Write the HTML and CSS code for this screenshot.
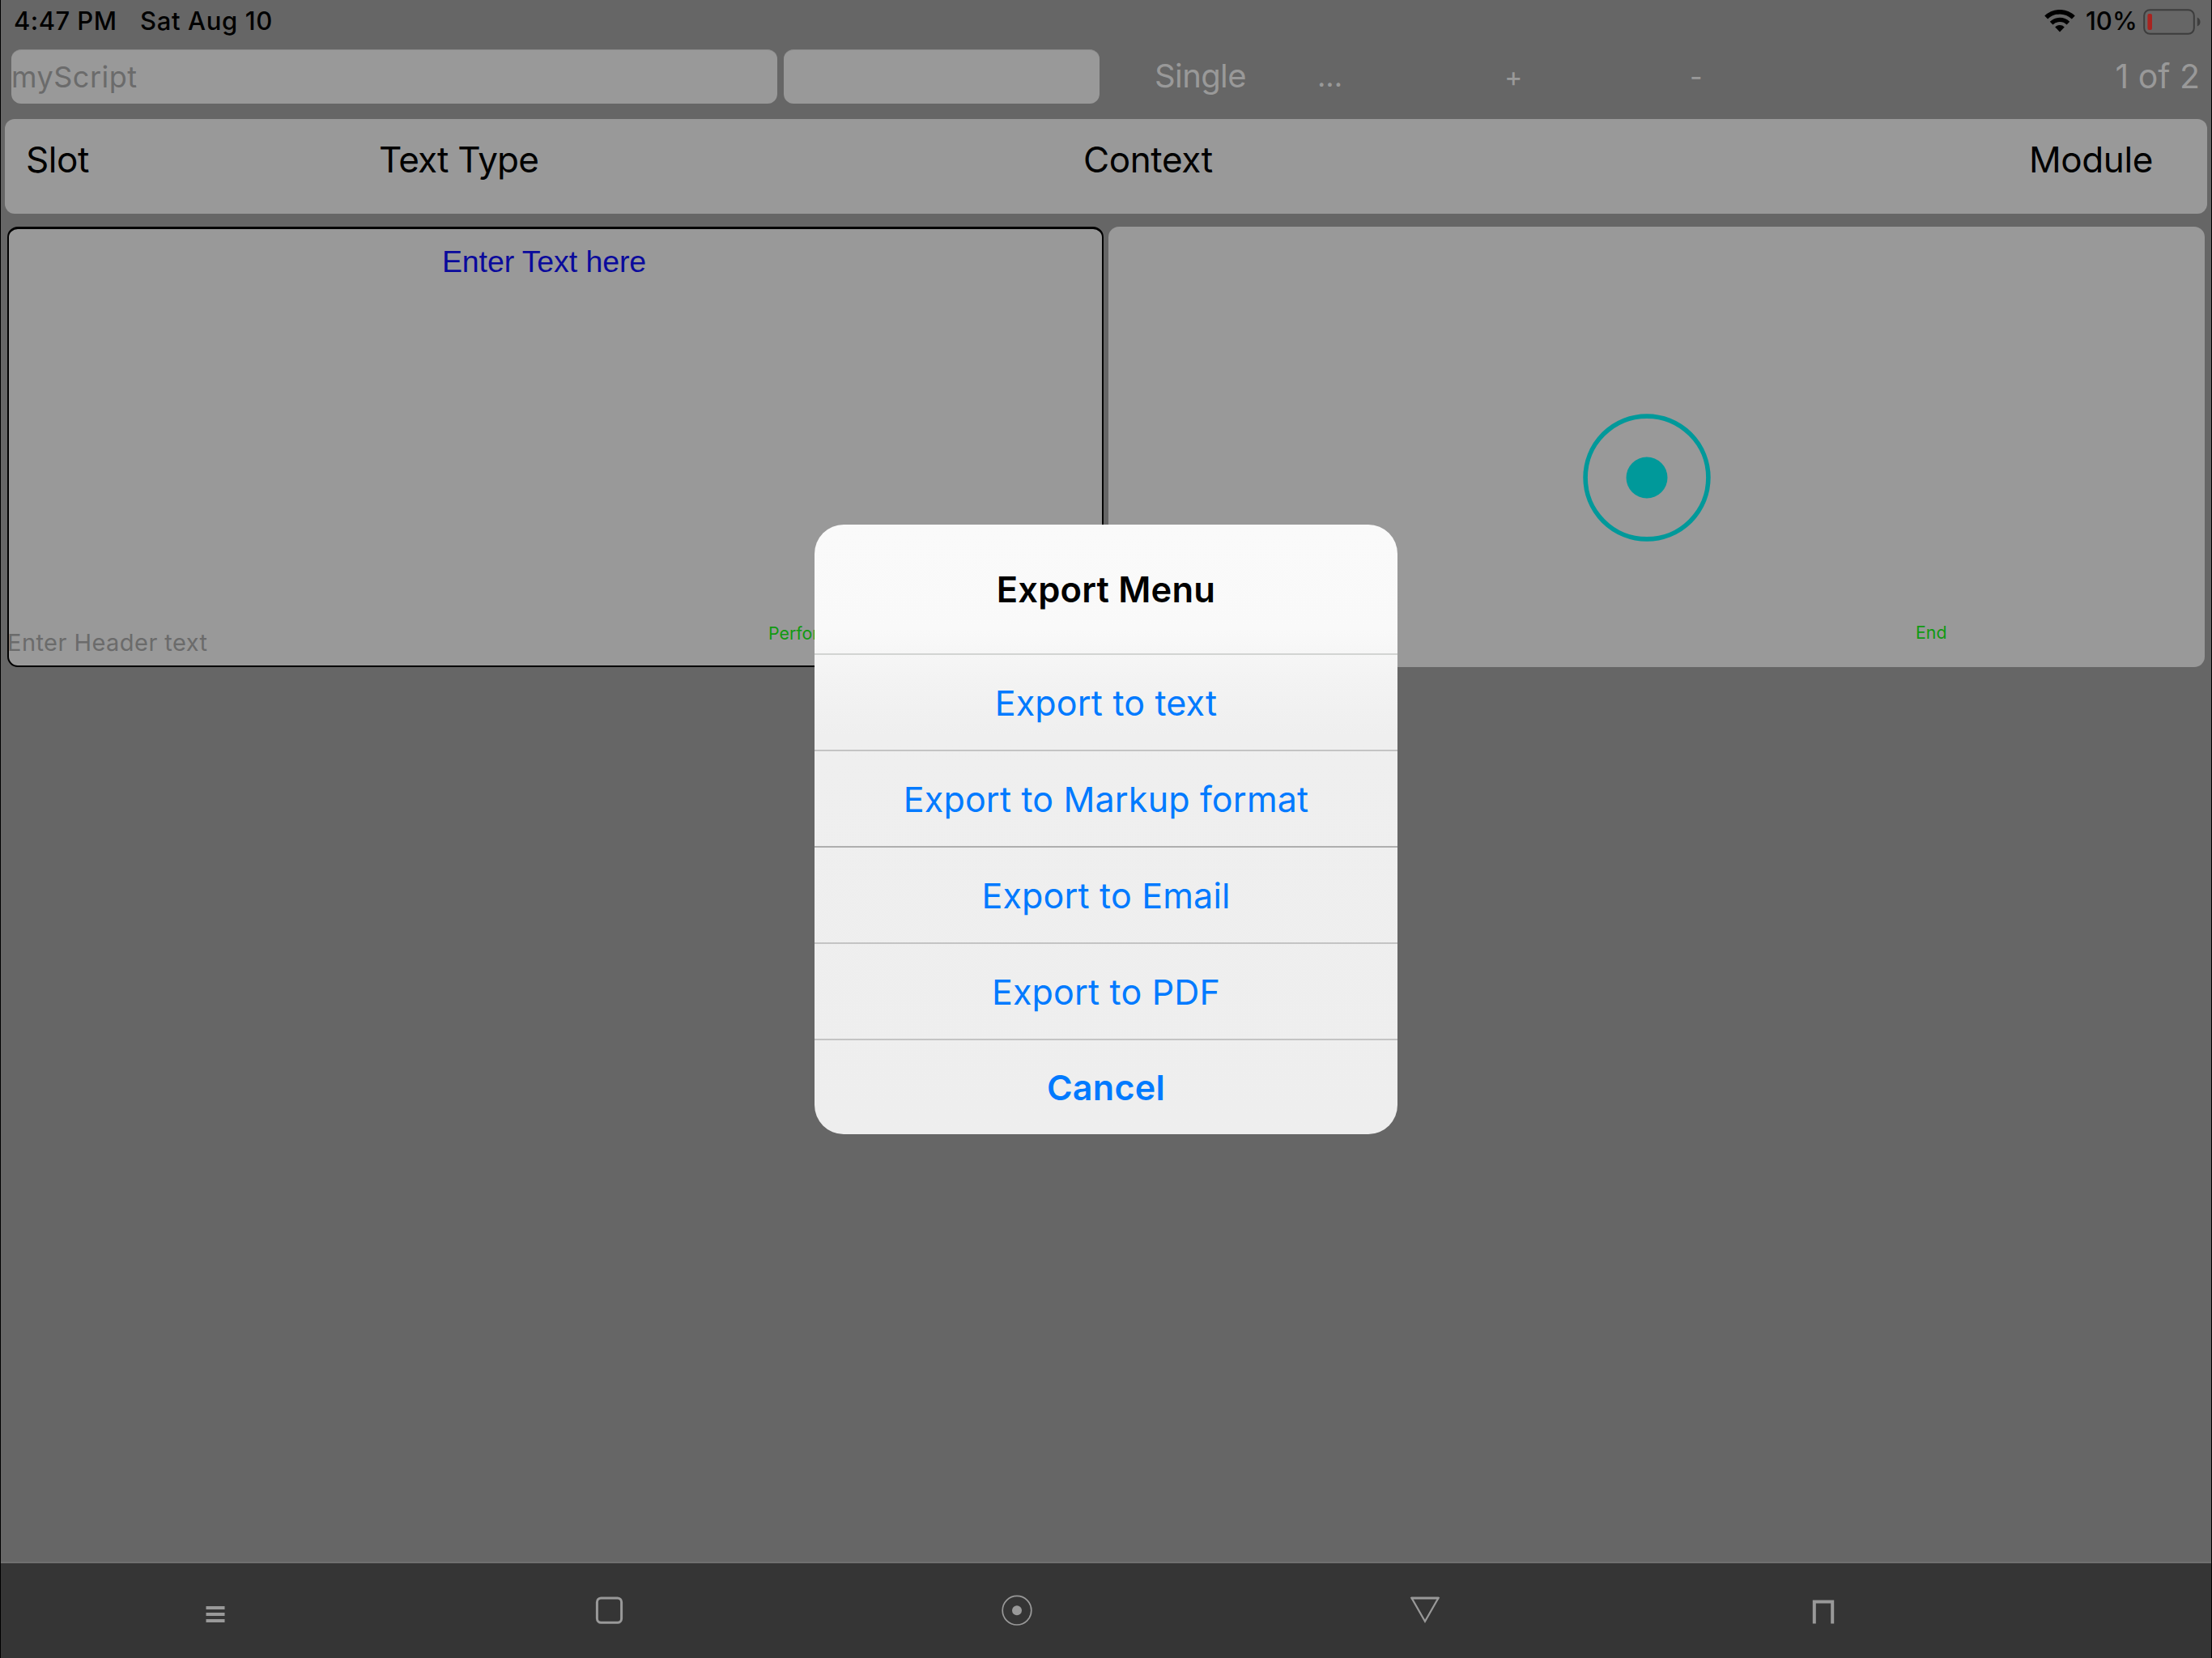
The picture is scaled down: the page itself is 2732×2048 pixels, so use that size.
FILE: index.html
```html
<!DOCTYPE html>
<html lang="en">
<head>
<meta charset="utf-8">
<title>myScript</title>
<link rel="stylesheet" href="styles.css">
</head>
<body>
<div class="screen">
  <header class="status">
    <span class="time">4:47 PM</span>
    <span class="date">Sat Aug 10</span>
    <svg class="wifi" width="38" height="28" viewBox="0 0 38 28">
      <path d="M2.2 9.6A24 24 0 0 1 35.8 9.6" fill="none" stroke="#000" stroke-width="5.6"/>
      <path d="M8.6 16.6A15 15 0 0 1 29.4 16.6" fill="none" stroke="#000" stroke-width="5.2"/>
      <path d="M19 27.4L13.2 21.4A8.4 8.4 0 0 1 24.8 21.4Z"/>
    </svg>
    <span class="percent">10%</span>
    <svg class="battery" width="72" height="32" viewBox="0 0 72 32">
      <rect x="1.2" y="1.2" width="61.6" height="29.6" rx="7" fill="none" stroke="#3d3d3d" stroke-width="2"/>
      <rect x="5.4" y="6" width="5.6" height="20" rx="2" fill="#a82420"/>
      <path d="M66.8 10.5Q70.5 12 70.5 16T66.8 21.5Z" fill="#3d3d3d"/>
    </svg>
  </header>

  <nav class="toolbar">
    <div class="field name-field">myScript</div>
    <div class="field short-field"></div>
    <span class="tool single">Single</span>
    <span class="tool more">...</span>
    <span class="tool add">+</span>
    <span class="tool remove">-</span>
    <span class="tool pages">1 of 2</span>
  </nav>

  <section class="columns">
    <span class="slot">Slot</span>
    <span class="type">Text Type</span>
    <span class="context">Context</span>
    <span class="module">Module</span>
  </section>

  <main class="panels">
    <section class="panel selected">
      <div class="prompt">Enter Text here</div>
      <div class="footer">
        <span class="header-text">Enter Header text</span>
        <span class="action">Performance</span>
      </div>
    </section>
    <section class="panel">
      <svg class="target" width="160" height="160" viewBox="0 0 160 160">
        <circle cx="80" cy="80" r="75.9" fill="none" stroke="#00999a" stroke-width="5.6"/>
        <circle cx="80" cy="80" r="25.5" fill="#00999a"/>
      </svg>
      <div class="footer">
        <span class="end">End</span>
      </div>
    </section>
  </main>

  <footer class="dock">
    <svg class="icon menu" width="40" height="40" viewBox="0 0 40 40">
      <path d="M8.5 16.9h23M8.5 25.1h23M8.5 33.1h23" stroke="#999" stroke-width="4"/>
    </svg>
    <svg class="icon square" width="40" height="40" viewBox="0 0 40 40">
      <rect x="5.4" y="4.9" width="30.2" height="30.4" rx="5" fill="none" stroke="#999" stroke-width="3"/>
    </svg>
    <svg class="icon record" width="40" height="40" viewBox="0 0 40 40">
      <circle cx="20" cy="20.2" r="17.8" fill="none" stroke="#999" stroke-width="1.7"/>
      <circle cx="20" cy="20.2" r="6" fill="#999"/>
    </svg>
    <svg class="icon down" width="40" height="40" viewBox="0 0 40 40">
      <path d="M3.6 5H36.4L20 33.8Z" fill="none" stroke="#999" stroke-width="2.2"/>
      <path d="M2.8 5H37.2" stroke="#999" stroke-width="2.8"/>
    </svg>
    <svg class="icon gate" width="40" height="40" viewBox="0 0 40 40">
      <path d="M8.8 36.6V9.4H31.2V36.6" fill="none" stroke="#999" stroke-width="4"/>
    </svg>
  </footer>

  <div class="dialog" role="dialog">
    <h1 class="title">Export Menu</h1>
    <button class="option text">Export to text</button>
    <button class="option markup">Export to Markup format</button>
    <button class="option email">Export to Email</button>
    <button class="option pdf">Export to PDF</button>
    <button class="option cancel">Cancel</button>
  </div>
</div>
</body>
</html>
```
FILE: styles.css
```css
* { box-sizing: border-box; }

body {
  margin: 0;
  background: #666;
  font-family: Inter, "Liberation Sans", sans-serif;
  color: #000;
}

.screen {
  position: relative;
  display: flex;
  flex-direction: column;
  width: 2732px;
  height: 2048px;
  overflow: hidden;
  border-left: 1px solid #000;
  border-right: 1px solid #000;
  background: #666;
  white-space: nowrap;
}

.status {
  display: flex;
  align-items: flex-start;
  height: 61px;
  padding: 0 12px 0 16px;
  font-size: 31px;
  font-weight: 500;
  line-height: 52px;
}
.time { width: 156px; letter-spacing: 0.45px; }
.date { letter-spacing: 0.65px; }
.wifi { margin: 12px 13px 0 auto; }
.percent { width: 71px; }
.battery { margin-top: 11px; }

.toolbar {
  display: flex;
  height: 67px;
  padding: 0 14px 0 13px;
  line-height: 67px;
}
.field {
  height: 67px;
  border-radius: 12px;
  border-top: 1px solid #8c8c8c;
  background: #999;
}
.name-field {
  width: 946px;
  margin-right: 8px;
  color: #6b6b6b;
  font-size: 36px;
  letter-spacing: 0.5px;
  line-height: 66px;
}
.short-field { width: 390px; }
.tool {
  color: #999;
  font-size: 40px;
  line-height: 66px;
}
.single { width: 201px; margin-left: 68px; letter-spacing: -0.6px; }
.more { width: 231px; font-size: 36px; line-height: 66px; }
.add { width: 229px; font-size: 34px; line-height: 68px; }
.remove { font-size: 34px; line-height: 68px; }
.pages { margin-left: auto; font-size: 41px; }

.columns {
  display: grid;
  grid-template-columns: 436px 870px 1fr auto;
  height: 117px;
  margin: 19px 5px 0 5px;
  padding: 0 67px 0 26px;
  border-radius: 12px;
  background: #999;
  font-size: 44px;
  letter-spacing: -0.4px;
  line-height: 100px;
}
.type { letter-spacing: -0.8px; }

.panels {
  display: grid;
  grid-template-columns: 1354px 1354px;
  column-gap: 6px;
  height: 544px;
  margin: 16px 0 0 8px;
}
.panel {
  display: flex;
  flex-direction: column;
  border-radius: 13px;
  background: #999;
}
.selected {
  border: 2px solid #000;
  border-top-width: 3px;
}
.prompt {
  padding-right: 28px;
  color: #0a0a9c;
  font-family: "Liberation Sans", Arial, sans-serif;
  font-size: 37.5px;
  letter-spacing: -0.1px;
  line-height: 80px;
  text-align: center;
}
.footer {
  display: flex;
  align-items: flex-end;
  height: 60px;
  margin-top: auto;
}
.header-text {
  width: 940px;
  margin-left: -2px;
  color: #6b6b6b;
  font-size: 29px;
  letter-spacing: 0.45px;
  line-height: 56px;
}
.action, .end {
  color: #109a10;
  font-size: 21.3px;
}
.action { line-height: 80px; }
.end { margin-left: 997px; line-height: 85px; }
.target { margin: 230px 0 0 585px; }

.dock {
  display: flex;
  align-items: flex-start;
  height: 119px;
  margin-top: auto;
  border-top: 2px solid #707070;
  background: #353535;
}
.icon { margin-top: 38px; }
.menu { margin-left: 245px; }
.square { margin-left: 446px; }
.record { margin-left: 464px; }
.down { margin-left: 464px; }
.gate { margin-left: 452px; }

.dialog {
  position: absolute;
  left: 1005px;
  top: 648px;
  display: grid;
  grid-template-rows: 159px 119px 119px 119px 119px 118px;
  width: 720px;
  height: 753px;
  overflow: hidden;
  border-radius: 36px;
  background: linear-gradient(#fafafa 0, #f9f9f9 130px, #f3f3f3 190px, #efefef 260px, #eee 100%);
  text-align: center;
}
.title {
  margin: 0;
  font-size: 43.5px;
  font-weight: 600;
  letter-spacing: 0.2px;
  line-height: 160px;
}
.option {
  margin: 0;
  padding: 0;
  border: 0;
  border-top: 2px solid #c4c4c4;
  background: none;
  color: #007aff;
  font: 400 43px/116px Inter, "Liberation Sans", sans-serif;
  letter-spacing: 0.18px;
}
.text { border-top-color: #d2d4d2; }
.email { border-top-color: #aeaeae; }
.cancel { font-weight: 600; letter-spacing: 0.3px; }
```
